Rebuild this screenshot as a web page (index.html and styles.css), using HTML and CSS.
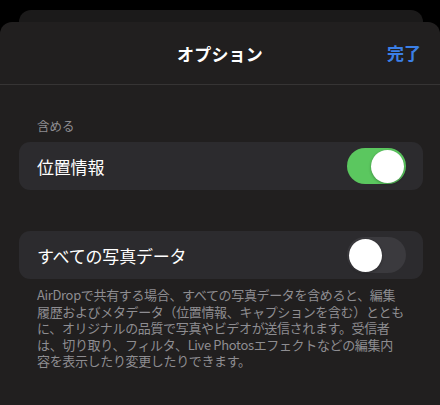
FILE: index.html
```html
<!DOCTYPE html>
<html lang="ja">
<head>
    <meta charset="UTF-8">
    <meta name="viewport" content="width=device-width, initial-scale=1.0">
    <title>オプション</title>
    <link rel="stylesheet" href="styles.css">
</head>
<body>

<!-- Sheet behind the current one -->
<div class="sheet-back"></div>

<div class="sheet">
    <div class="sheet-header">
        <h2 class="sheet-title">オプション</h2>
        <button class="done-btn">完了</button>
    </div>

    <div class="sheet-content">
        <div class="section-label">含める</div>

        <div class="row">
            <span class="row-label">位置情報</span>
            <div class="toggle on"><span class="knob"></span></div>
        </div>

        <div class="row row-gap">
            <span class="row-label">すべての写真データ</span>
            <div class="toggle"><span class="knob"></span></div>
        </div>

        <p class="footnote">AirDropで共有する場合、すべての写真データを含めると、編集<br>履歴およびメタデータ（位置情報、キャプションを含む）ととも<br>に、オリジナルの品質で写真やビデオが送信されます。受信者<br>は、切り取り、フィルタ、Live Photosエフェクトなどの編集内<br>容を表示したり変更したりできます。</p>
    </div>
</div>

</body>
</html>
```

FILE: styles.css
```css
body {
    margin: 0;
    background-color: #000;
    font-family: "Noto Sans CJK JP", "Noto Sans", sans-serif;
    color: #fff;
    height: 405px;
    overflow: hidden;
}
.sheet-back {
    margin: 10px 17px 0 19px;
    height: 24px;
    background-color: #1b1a1a;
    border-radius: 12px 12px 0 0;
}
.sheet {
    margin-top: -12px;
    height: 400px;
    background-color: #211f1f;
    border-radius: 12px 12px 0 0;
}
.sheet-header {
    position: relative;
    height: 62px;
    display: flex;
    align-items: center;
    justify-content: center;
    border-bottom: 1px solid #363434;
}
.sheet-title {
    margin: 0;
    font-size: 17px;
    font-weight: 700;
    letter-spacing: 0.2px;
}
.done-btn {
    position: absolute;
    right: 19px;
    top: 21px;
    padding: 0;
    background: none;
    border: none;
    color: #3b7fe6;
    font-family: inherit;
    font-size: 17px;
    font-weight: 700;
    line-height: 20px;
}
.sheet-content {
    padding: 0 17px 0 19px;
}
.section-label {
    margin-top: 33px;
    padding-left: 18px;
    font-size: 12.5px;
    line-height: 16px;
    color: #8e8d91;
}
.row {
    margin-top: 8px;
    height: 48px;
    padding: 0 17px 0 18px;
    display: flex;
    align-items: center;
    justify-content: space-between;
    background-color: #2c2b2e;
    border-radius: 11px;
}
.row-gap {
    margin-top: 41px;
}
.row-label {
    font-size: 17px;
    letter-spacing: -0.2px;
}
.toggle {
    width: 59px;
    height: 36px;
    border-radius: 18px;
    background-color: #3b3a3e;
    display: flex;
    align-items: center;
    padding: 0 2px;
    box-sizing: border-box;
}
.toggle.on {
    background-color: #5bc75f;
    justify-content: flex-end;
}
.knob {
    width: 33px;
    height: 33px;
    border-radius: 50%;
    background-color: #fff;
    box-shadow: 0 1px 3px rgba(0,0,0,0.3);
}
.footnote {
    margin: 8px 0 0;
    padding-left: 18px;
    font-size: 13px;
    line-height: 16.5px;
    letter-spacing: -0.35px;
    color: #8e8d91;
    white-space: nowrap;
}
```
